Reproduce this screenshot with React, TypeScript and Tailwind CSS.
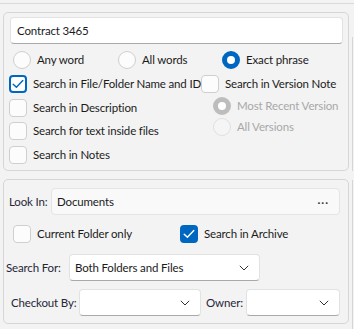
import React from "react";

const font = { fontFamily: 'Lato, "Noto Sans", sans-serif' };
const txt = "text-[11.5px] tracking-[-0.15px]";

function Chevron() {
  return (
    <svg width="10" height="6" viewBox="0 0 10 6" className="shrink-0">
      <path d="M0.8 0.8 L5 5 L9.2 0.8" fill="none" stroke="#333" strokeWidth="1" />
    </svg>
  );
}

function Check({ color }: { color: string }) {
  return (
    <svg width="12" height="10" viewBox="0 0 12 10">
      <path d="M1.2 5.2 L4.4 8.3 L10.8 1.6" fill="none" stroke={color} strokeWidth="1.4" strokeLinecap="round" strokeLinejoin="round" />
    </svg>
  );
}

function CheckBox({ checked, focus, label }: { checked?: boolean; focus?: boolean; label: string }) {
  return (
    <div className="flex items-center h-[18px] gap-[6px]">
      {checked && focus ? (
        <div className="w-[18px] h-[18px] rounded-[4px] border-2 border-[#0067c0] bg-white flex items-center justify-center shrink-0">
          <Check color="#0067c0" />
        </div>
      ) : checked ? (
        <div className="w-[18px] h-[18px] rounded-[4px] bg-[#0067c0] flex items-center justify-center shrink-0">
          <Check color="#ffffff" />
        </div>
      ) : (
        <div className="w-[18px] h-[18px] rounded-[4px] border border-[#cfcfcf] bg-[#fcfcfc] shrink-0" />
      )}
      <span className={`${txt} text-[#1b1b1b] whitespace-nowrap`}>{label}</span>
    </div>
  );
}

function Radio({ checked, disabled, label }: { checked?: boolean; disabled?: boolean; label: string }) {
  let dot;
  if (checked && !disabled) {
    dot = <div className="w-[18px] h-[18px] rounded-full border-[5px] border-[#0067c0] bg-white shrink-0" />;
  } else if (checked && disabled) {
    dot = <div className="w-[18px] h-[18px] rounded-full border-[5px] border-[#bdbdbd] bg-white shrink-0" />;
  } else if (disabled) {
    dot = <div className="w-[18px] h-[18px] rounded-full border border-[#e0e0e0] bg-[#f5f5f5] shrink-0" />;
  } else {
    dot = <div className="w-[18px] h-[18px] rounded-full border border-[#cfcfcf] bg-[#fcfcfc] shrink-0" />;
  }
  return (
    <div className="flex items-center h-[18px] gap-[6px]">
      {dot}
      <span className={`${txt} whitespace-nowrap ${disabled ? "text-[#a8a8a8]" : "text-[#1b1b1b]"}`}>{label}</span>
    </div>
  );
}

function Combo({ width, text }: { width: string; text?: string }) {
  return (
    <div className={`${width} h-[27px] bg-white rounded-[4px] border border-[#e2e2e2] border-b-[#a9a9a9] flex items-center justify-between pl-[5px] pr-[10px] shrink-0`}>
      <span className={`${txt} text-[#1b1b1b] whitespace-nowrap`}>{text}</span>
      <Chevron />
    </div>
  );
}

export default function App() {
  return (
    <div style={font} className="w-[354px] h-[329px] bg-[#f3f3f3] overflow-hidden flex flex-col">
      <div className="h-[4px] border-b border-[#dadada] shrink-0" />
      <div className="flex">
        <div className="w-[349px] pl-[3px] shrink-0">
          {/* search text panel */}
          <div className="mt-[8px] w-[346px] h-[159px] rounded-[5px] border border-[#d6d6d6]">
            <div className="ml-[6px] mt-[4px] w-[333px] h-[27px] bg-white rounded-[4px] border border-[#e2e2e2] border-b-[#a9a9a9] flex items-center pl-[6px]">
              <span className={`${txt} text-[#1b1b1b]`}>Contract 3465</span>
            </div>
            <div className="flex mt-[7px] ml-[9px]">
              <div className="w-[105px]">
                <Radio label="Any word" />
              </div>
              <div className="w-[104px]">
                <Radio label="All words" />
              </div>
              <Radio checked label="Exact phrase" />
            </div>
            <div className="flex mt-[6px] ml-[5px]">
              <div className="w-[192px] flex flex-col shrink-0">
                <CheckBox checked focus label="Search in File/Folder Name and ID" />
                <div className="mt-[6px]">
                  <CheckBox label="Search in Description" />
                </div>
                <div className="mt-[5px]">
                  <CheckBox label="Search for text inside files" />
                </div>
                <div className="mt-[6px]">
                  <CheckBox label="Search in Notes" />
                </div>
              </div>
              <div className="flex flex-col">
                <CheckBox label="Search in Version Note" />
                <div className="ml-[12px] mt-[4px]">
                  <Radio checked disabled label="Most Recent Version" />
                </div>
                <div className="ml-[12px] mt-[3px]">
                  <Radio disabled label="All Versions" />
                </div>
              </div>
            </div>
          </div>

          {/* location panel */}
          <div className="mt-[8px] w-[346px] h-[145px] rounded-[5px] border border-[#d6d6d6]">
            <div className="flex items-center mt-[8px] ml-[5px]">
              <span className={`w-[42px] shrink-0 ${txt} text-[#262638] whitespace-nowrap`}>Look In:</span>
              <div className="w-[289px] h-[27px] bg-[#f9f9f9] rounded-[4px] border border-[#e4e4e4] flex items-center justify-between pl-[5px] pr-[10px]">
                <span className={`${txt} text-[#1b1b1b]`}>Documents</span>
                <span className="text-[12px] font-bold text-[#333] tracking-[1px] leading-none -mt-[4px]">...</span>
              </div>
            </div>
            <div className="flex mt-[10px] ml-[9px]">
              <div className="w-[167px] shrink-0">
                <CheckBox label="Current Folder only" />
              </div>
              <CheckBox checked label="Search in Archive" />
            </div>
            <div className="flex items-center mt-[11px] ml-[2px]">
              <span className={`w-[63px] shrink-0 ${txt} text-[#262638] whitespace-nowrap`}>Search For:</span>
              <Combo width="w-[191px]" text="Both Folders and Files" />
            </div>
            <div className="flex items-center mt-[8px] ml-[7px]">
              <span className={`w-[68px] shrink-0 ${txt} text-[#262638] whitespace-nowrap`}>Checkout By:</span>
              <Combo width="w-[122px]" />
              <span className={`w-[45px] shrink-0 pl-[5px] ${txt} text-[#262638] whitespace-nowrap`}>Owner:</span>
              <Combo width="w-[94px]" />
            </div>
          </div>
        </div>
        <div className="flex flex-col pl-[3px]">
          <div className="mt-[33px] h-[134px] border-l border-[#d6d6d6]" />
          <div className="mt-[9px] h-[150px] border-l border-[#d6d6d6]" />
        </div>
      </div>
    </div>
  );
}
